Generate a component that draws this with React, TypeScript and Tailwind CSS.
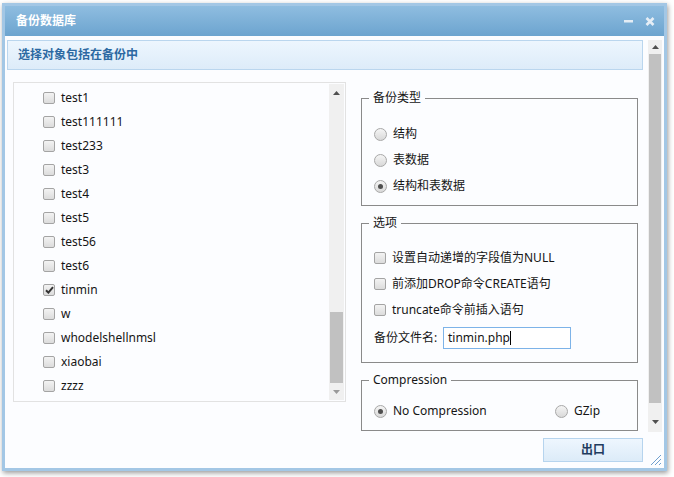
import React from "react";

const tables = [
  "test1",
  "test111111",
  "test233",
  "test3",
  "test4",
  "test5",
  "test56",
  "test6",
  "tinmin",
  "w",
  "whodelshellnmsl",
  "xiaobai",
  "zzzz",
];

function Checkbox({ checked = false }: { checked?: boolean }) {
  return (
    <span className="w-[12px] h-[12px] shrink-0 rounded-[2px] border border-[#a4a4a4] bg-linear-to-b from-[#f3f3f3] to-[#dcdcdc] flex items-center justify-center">
      {checked && (
        <svg width="9" height="8" viewBox="0 0 9 8">
          <path d="M1 4.2 L3.4 6.6 L8 1.2" fill="none" stroke="#333" strokeWidth="2" />
        </svg>
      )}
    </span>
  );
}

function Radio({ checked = false }: { checked?: boolean }) {
  return (
    <span className="w-[13px] h-[13px] shrink-0 rounded-full border border-[#a8a8a8] bg-linear-to-b from-[#f5f5f5] to-[#d9d9d9] flex items-center justify-center">
      {checked && <span className="w-[5px] h-[5px] rounded-full bg-[#4f4f4f]" />}
    </span>
  );
}

function ArrowUp() {
  return (
    <svg width="7" height="4" viewBox="0 0 7 4">
      <path d="M0 4 L3.5 0 L7 4 Z" fill="#505050" />
    </svg>
  );
}

function ArrowDown({ color = "#505050" }: { color?: string }) {
  return (
    <svg width="7" height="4" viewBox="0 0 7 4">
      <path d="M0 0 L3.5 4 L7 0 Z" fill={color} />
    </svg>
  );
}

export default function App() {
  return (
    <div className="w-[674px] h-[477px] bg-white overflow-hidden font-['Noto_Sans','Noto_Sans_CJK_SC',sans-serif] text-[12px] text-[#151515]">
      <div className="relative ml-[2px] mt-[3px] w-[665px] h-[468px] border-[3px] border-[#a3c7e5] bg-[#fcfdff] shadow-[1px_2px_5px_rgba(0,0,0,0.4)] flex flex-col">
        {/* title bar */}
        <div className="h-[30px] shrink-0 flex items-center justify-between pl-[11px] pr-[9px] bg-linear-to-b from-[#8fbde0] to-[#6ca4cf]">
          <span className="text-white font-bold text-[12px] leading-none">备份数据库</span>
          <div className="flex items-center gap-[12px]">
            <svg width="9" height="3" viewBox="0 0 9 3">
              <rect x="0" y="0" width="9" height="2.5" fill="#e4edf5" />
            </svg>
            <svg width="10" height="9" viewBox="0 0 10 9">
              <path d="M1.5 1 L8.5 8 M8.5 1 L1.5 8" stroke="#e6eef6" strokeWidth="2.6" />
            </svg>
          </div>
        </div>

        {/* content */}
        <div className="flex items-start pt-[4px]">
          <div className="ml-[2px] w-[636px] flex flex-col">
            <div className="h-[30px] border border-[#bad6ee] bg-linear-to-b from-[#edf6fe] to-[#ddecf9] flex items-center pl-[10px] text-[#2c69a2] font-bold leading-none">
              选择对象包括在备份中
            </div>

            <div className="flex items-start mt-[12px]">
              {/* table list */}
              <div className="ml-[6px] w-[333px] h-[320px] border border-[#e2e2e2] p-[1px] flex">
                <div className="flex-1 pt-[2px] flex flex-col">
                  {tables.map((t) => (
                    <div key={t} className="h-[24px] flex items-center pl-[28px] gap-[6px] leading-none">
                      <Checkbox checked={t === "tinmin"} />
                      <span>{t}</span>
                    </div>
                  ))}
                </div>
                <div className="w-[15px] bg-[#f0f0f0] flex flex-col">
                  <div className="h-[18px] flex items-center justify-center">
                    <ArrowUp />
                  </div>
                  <div className="flex-1" />
                  <div className="h-[71px] mx-[1px] bg-[#c1c1c1]" />
                  <div className="h-[17px] flex items-center justify-center">
                    <ArrowDown color="#9a9a9a" />
                  </div>
                </div>
              </div>

              {/* options */}
              <div className="ml-[15px] w-[277px] mt-[8px] flex flex-col gap-[9px]">
                <fieldset className="border border-[#8a8a8a] px-[6px] pt-[15px] pb-[6px]">
                  <legend className="ml-[1px] px-[4px] leading-[16px]">备份类型</legend>
                  <div className="pl-[6px] flex flex-col">
                    {[
                      ["结构", false],
                      ["表数据", false],
                      ["结构和表数据", true],
                    ].map(([label, on]) => (
                      <div key={label as string} className="h-[26px] flex items-center gap-[6px] leading-none">
                        <Radio checked={on as boolean} />
                        <span>{label}</span>
                      </div>
                    ))}
                  </div>
                </fieldset>

                <fieldset className="border border-[#8a8a8a] px-[6px] pt-[14px] pb-[13px]">
                  <legend className="ml-[1px] px-[4px] leading-[16px]">选项</legend>
                  <div className="pl-[6px] flex flex-col">
                    {["设置自动递增的字段值为NULL", "前添加DROP命令CREATE语句", "truncate命令前插入语句"].map((label) => (
                      <div key={label} className="h-[26px] flex items-center gap-[6px] leading-none">
                        <Checkbox />
                        <span>{label}</span>
                      </div>
                    ))}
                    <div className="mt-[4px] h-[22px] flex items-center leading-none">
                      <span className="w-[69px]">备份文件名:</span>
                      <div className="w-[128px] h-[22px] border border-[#7db3e8] bg-white flex items-center pl-[4px]">
                        <span>tinmin.php</span>
                        <span className="w-px h-[14px] bg-black" />
                      </div>
                    </div>
                  </div>
                </fieldset>

                <fieldset className="border border-[#8a8a8a] px-[6px] pt-[10px] pb-[6px]">
                  <legend className="ml-[1px] px-[4px] leading-[16px]">Compression</legend>
                  <div className="pl-[6px] h-[26px] flex items-center leading-none">
                    <div className="w-[181px] flex items-center gap-[6px]">
                      <Radio checked />
                      <span>No Compression</span>
                    </div>
                    <div className="flex items-center gap-[6px]">
                      <Radio />
                      <span>GZip</span>
                    </div>
                  </div>
                </fieldset>
              </div>
            </div>
          </div>

          {/* outer scrollbar */}
          <div className="ml-[5px] w-[14px] h-[392px] bg-[#f0f0f0] flex flex-col">
            <div className="h-[13px] flex items-center justify-center">
              <ArrowUp />
            </div>
            <div className="mt-[1px] h-[349px] mx-[1px] bg-[#c1c1c1]" />
            <div className="flex-1" />
            <div className="h-[20px] flex items-center justify-center">
              <ArrowDown />
            </div>
          </div>
        </div>

        {/* footer */}
        <div className="ml-[2px] w-[636px] mt-[6px] flex justify-end">
          <button className="w-[100px] h-[24px] border border-[#b6d4ee] bg-linear-to-b from-[#eef6fe] to-[#dcebf8] text-[#1f3c5e] font-bold text-[12px] leading-none">
            出口
          </button>
        </div>

        {/* resize grip */}
        <svg className="absolute right-[2px] bottom-[2px]" width="12" height="12" viewBox="0 0 12 12">
          <path d="M11 1 L1 11 M11 5 L5 11 M11 9 L9 11" stroke="#6f9fce" strokeWidth="1" />
        </svg>
      </div>
    </div>
  );
}
